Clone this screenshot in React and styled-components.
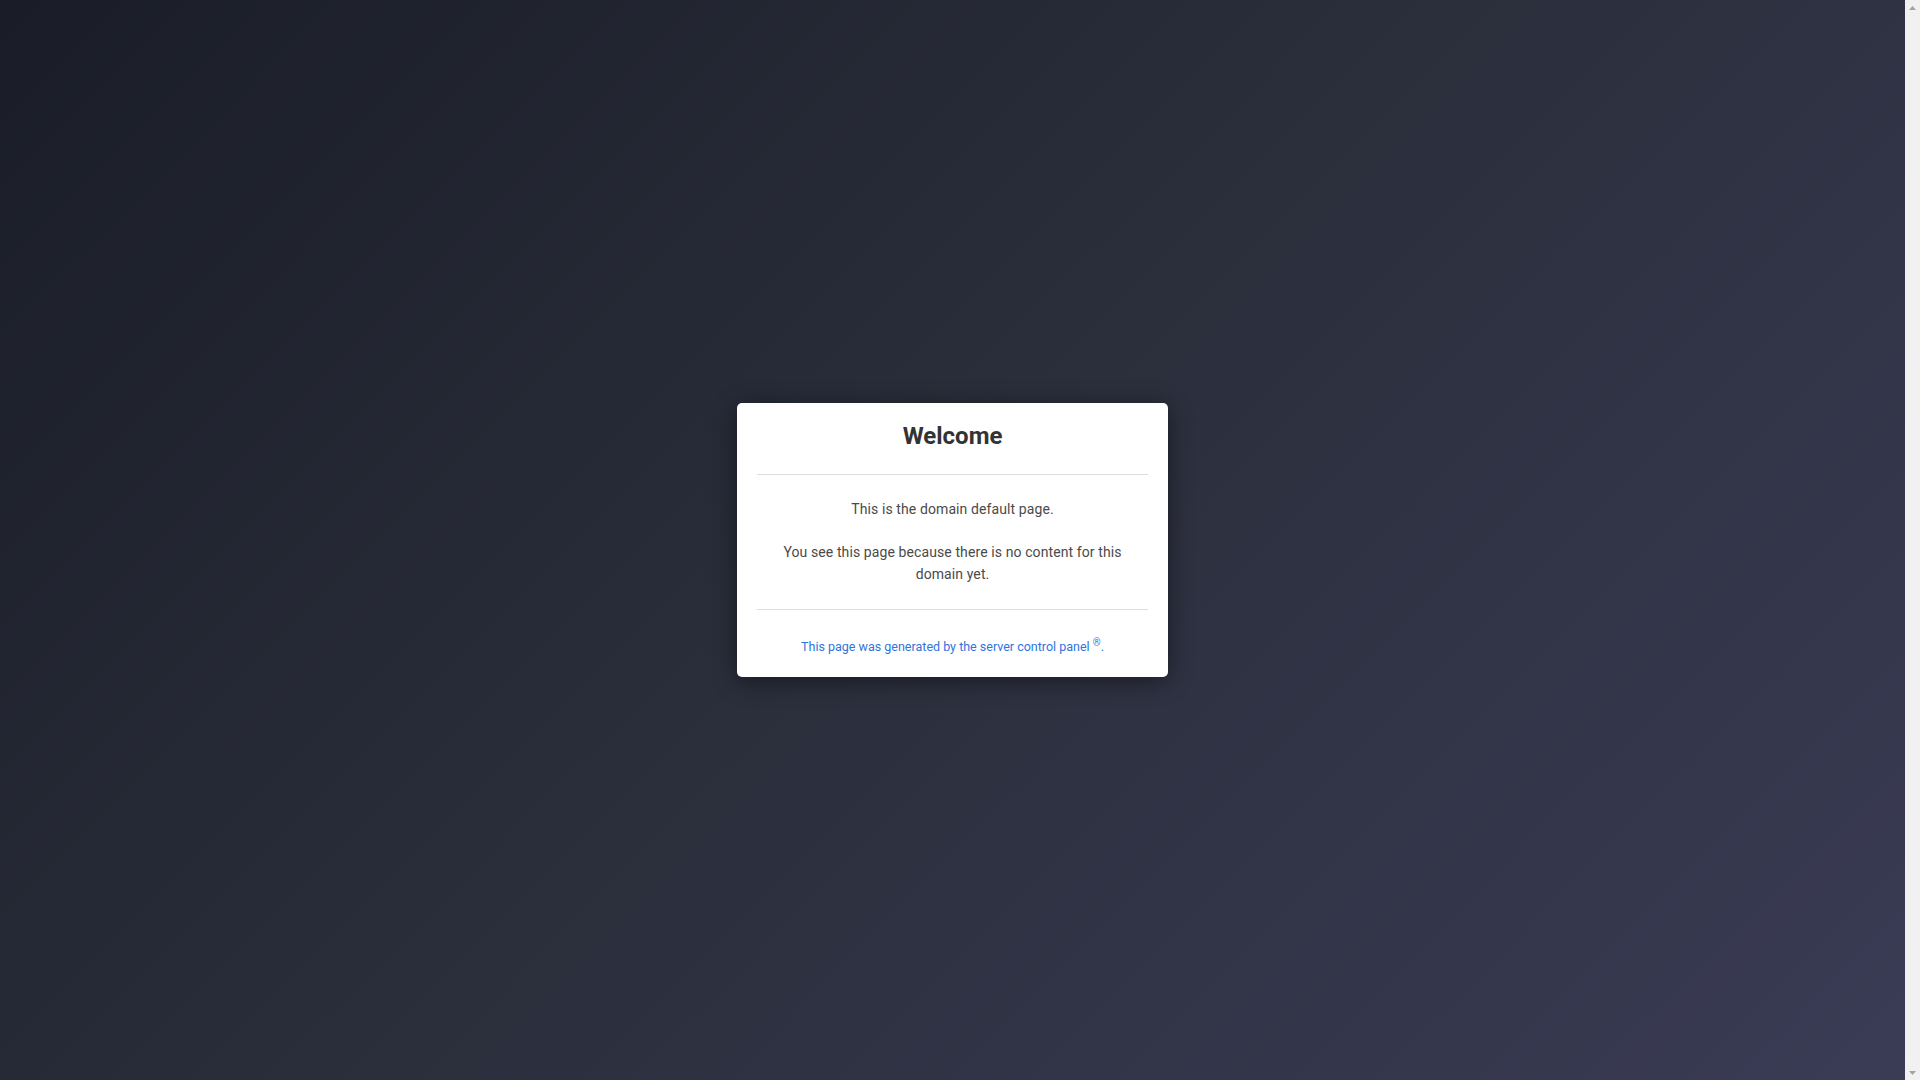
import React from "react";
import styled, { createGlobalStyle } from "styled-components";

const GlobalStyle = createGlobalStyle`
  html, body {
    margin: 0;
    overflow: hidden;
  }
  body {
    font-family: Roboto, "Liberation Sans", sans-serif;
  }
`;

export default function App() {
  return (
    <>
      <GlobalStyle />
      <Frame>
        <Page>
          <Card>
            <Header>
              <Title>Welcome</Title>
            </Header>
            <Body>
              <Text>This is the domain default page.</Text>
              <Text>You see this page because there is no content for this domain yet.</Text>
            </Body>
            <Footer>
              <FooterLink href="#">
                This page was generated by the server control panel <sup>®</sup>.
              </FooterLink>
            </Footer>
          </Card>
        </Page>
        <Scrollbar>
          <Arrow viewBox="0 0 15 15">
            <path d="M4 10 L7.5 6 L11 10 Z" fill="#a3a3a3" />
          </Arrow>
          <Arrow viewBox="0 0 15 15">
            <path d="M4 6 L7.5 10 L11 6 Z" fill="#a3a3a3" />
          </Arrow>
        </Scrollbar>
      </Frame>
    </>
  );
}

const Frame = styled.div`
  display: flex;
  height: 100vh;
`;

const Page = styled.div`
  flex: 1;
  display: flex;
  align-items: center;
  justify-content: center;
  background: linear-gradient(135deg, #1a1d27 0%, #2b2f3c 50%, #3a3b55 100%);
`;

const Scrollbar = styled.div`
  width: 15px;
  display: flex;
  flex-direction: column;
  justify-content: space-between;
  background: #f1f1f1;
`;

const Arrow = styled.svg`
  width: 15px;
  height: 15px;
  display: block;
`;

const Card = styled.div`
  width: 431px;
  box-sizing: border-box;
  padding: 0 20px;
  background: #fff;
  border-radius: 5px;
  box-shadow: 0 4px 24px rgba(0, 0, 0, 0.45);
  text-align: center;
`;

const Header = styled.div`
  padding: 19px 0 24px;
  border-bottom: 1px solid #ddd;
`;

const Title = styled.h1`
  margin: 0;
  font-size: 24px;
  line-height: 28px;
  font-weight: 700;
  color: #333;
`;

const Body = styled.div`
  padding: 23px 20px 24px;
  border-bottom: 1px solid #ddd;
`;

const Text = styled.p`
  margin: 0;
  font-size: 14px;
  line-height: 22px;
  letter-spacing: 0.1px;
  color: #4a4a4a;
  & + & {
    margin-top: 21px;
  }
`;

const Footer = styled.div`
  padding: 28px 0 21px;
  font-size: 12.5px;
  line-height: 18px;
`;

const FooterLink = styled.a`
  color: #2f74e0;
  text-decoration: none;
  & > sup {
    line-height: 0;
    font-size: 10px;
  }
`;
